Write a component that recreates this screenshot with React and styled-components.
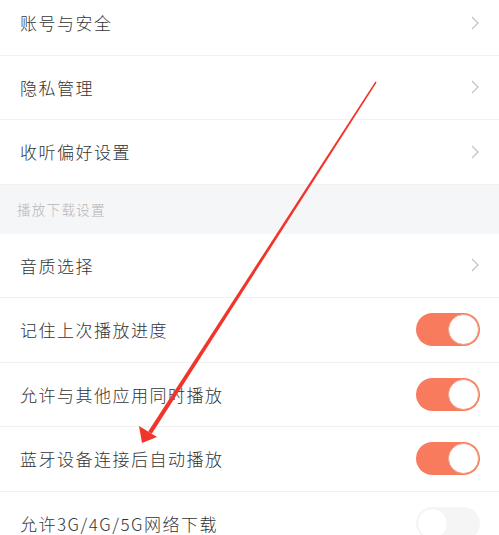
import React from "react";
import styled, { createGlobalStyle } from "styled-components";

const Global = createGlobalStyle`
  html, body { margin: 0; padding: 0; background: #ffffff; }
  body { font-family: "Noto Sans CJK SC", "Noto Sans", sans-serif; overflow: hidden; }
`;

const Page = styled.div`
  position: relative;
  width: 499px;
  height: 535px;
  overflow: hidden;
  background: #ffffff;
`;

const List = styled.div`
  display: flex;
  flex-direction: column;
  margin-top: -9px;
`;

const Row = styled.div`
  height: 63.5px;
  display: flex;
  align-items: center;
  justify-content: space-between;
  padding: 0 19px 0 20px;
  border-bottom: 1px solid #f1f1f1;
  box-sizing: content-box;
  flex-shrink: 0;
`;

const Label = styled.span`
  font-size: 17px;
  font-weight: 300;
  letter-spacing: 1.5px;
  color: #333333;
`;

const SectionHeader = styled.div`
  height: 49px;
  display: flex;
  align-items: center;
  padding-left: 17px;
  background: #f5f6f8;
  flex-shrink: 0;
`;

const SectionTitle = styled.span`
  font-size: 13.5px;
  font-weight: 300;
  letter-spacing: 1.3px;
  color: #b4b4b6;
`;

const ChevronWrap = styled.span`
  display: flex;
  margin-right: 1px;
`;

const Track = styled.div`
  width: 64px;
  height: 33px;
  border-radius: 17px;
  box-sizing: border-box;
  background: ${(p) => (p.$on ? "#f77b5c" : "#f5f5f5")};
  display: flex;
  align-items: center;
  justify-content: ${(p) => (p.$on ? "flex-end" : "flex-start")};
  padding: 1px;
`;

const Knob = styled.div`
  width: 31px;
  height: 31px;
  border-radius: 50%;
  background: #ffffff;
  box-sizing: border-box;
  border: 1px solid ${(p) => (p.$on ? "#f0a08a" : "#f3f3f3")};
`;

const Overlay = styled.svg`
  position: absolute;
  left: 0;
  top: 0;
  pointer-events: none;
`;

const Chevron = () => (
  <ChevronWrap>
    <svg width="8" height="14" viewBox="0 0 8 14">
      <path d="M1 1 L7 7 L1 13" fill="none" stroke="#c2c2c2" strokeWidth="1.2" />
    </svg>
  </ChevronWrap>
);

const Toggle = ({ on }) => (
  <Track $on={on}>
    <Knob $on={on} />
  </Track>
);

const items1 = ["账号与安全", "隐私管理", "收听偏好设置"];
const items2 = [
  { label: "音质选择", type: "nav" },
  { label: "记住上次播放进度", type: "toggle", on: true },
  { label: "允许与其他应用同时播放", type: "toggle", on: true },
  { label: "蓝牙设备连接后自动播放", type: "toggle", on: true },
  { label: "允许3G/4G/5G网络下载", type: "toggle", on: false },
];

export default function App() {
  return (
    <Page>
      <Global />
      <List>
        {items1.map((t) => (
          <Row key={t}>
            <Label>{t}</Label>
            <Chevron />
          </Row>
        ))}
        <SectionHeader>
          <SectionTitle>播放下载设置</SectionTitle>
        </SectionHeader>
        {items2.map((it) => (
          <Row key={it.label}>
            <Label>{it.label}</Label>
            {it.type === "nav" ? <Chevron /> : <Toggle on={it.on} />}
          </Row>
        ))}
      </List>
      <Overlay width="499" height="535" viewBox="0 0 499 535">
        <polygon
          points="376.6,82.4 375.4,81.6 148.2,431.6 151.8,433.8"
          fill="#f0352a"
        />
        <polygon points="142,443 139,426 157,437" fill="#f0352a" />
      </Overlay>
    </Page>
  );
}
